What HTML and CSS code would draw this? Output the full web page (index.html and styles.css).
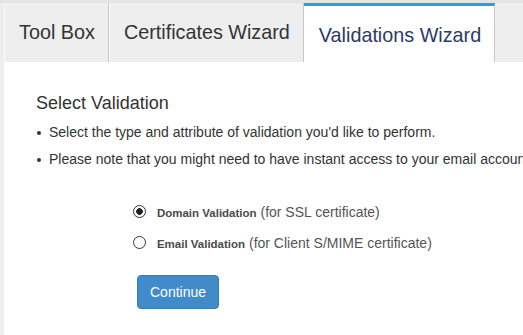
FILE: index.html
```html
<!DOCTYPE html>
<html lang="en">
<head>
  <meta charset="UTF-8" />
  <title>Validations Wizard</title>
  <link rel="stylesheet" href="styles.css">
</head>
<body>

  <div class="tabs">
    <div class="tab">Tool Box</div>
    <div class="tab">Certificates Wizard</div>
    <div class="tab active">Validations Wizard</div>
  </div>

  <div class="panel">
    <h2>Select Validation</h2>
    <ul class="notes">
      <li>Select the type and attribute of validation you'd like to perform.</li>
      <li>Please note that you might need to have instant access to your email account to complete the validation.</li>
    </ul>

    <form class="choices">
      <label class="choice">
        <input type="radio" name="vtype" value="domain" checked />
        <b>Domain Validation</b> (for SSL certificate)
      </label>
      <label class="choice">
        <input type="radio" name="vtype" value="email" />
        <b>Email Validation</b> (for Client S/MIME certificate)
      </label>
      <button type="button" class="btn">Continue</button>
    </form>
  </div>

</body>
</html>
```

FILE: styles.css
```css
html, body {
  margin: 0;
  padding: 0;
  height: 100%;
}

body {
  font-family: "Liberation Sans", Arial, sans-serif;
  background: #eeeeee;
  color: #333;
  overflow: hidden;
}

.tabs {
  display: flex;
  border-top: 3px solid #e4e4e4;
  padding-left: 4px;
  height: 59px;
}

.tab {
  font-size: 19.8px;
  line-height: 59px;
  padding: 0 13px 0 14px;
  color: #333;
  border-left: 1px solid #fafafa;
  border-right: 1px solid #c8c8c8;
  white-space: nowrap;
}

.tab.active {
  background: #fff;
  color: #2b3a67;
  border-top: 3px solid #2a9fd6;
  border-left: none;
  padding: 3px 13px 0 15px;
  line-height: 53px;
}

.panel {
  background: #fff;
  margin-left: 4px;
  height: 273px;
  padding: 31px 0 0 32px;
  box-sizing: border-box;
}

h2 {
  font-size: 18px;
  font-weight: normal;
  line-height: 20px;
  margin: 0 0 10px;
  color: #333;
}

.notes {
  list-style: none;
  margin: 0;
  padding: 0;
  font-size: 14px;
  line-height: 19px;
  white-space: nowrap;
}

.notes li {
  display: flex;
  align-items: center;
  margin-bottom: 8px;
}

.notes li::before {
  content: "";
  width: 4px;
  height: 4px;
  border-radius: 50%;
  background: #333;
  margin: 1px 8px 0 1px;
  flex-shrink: 0;
}

.choices {
  margin: 33px 0 0 97px;
}

.choice {
  display: block;
  height: 20px;
  line-height: 20px;
  margin-bottom: 11px;
  font-size: 14px;
  color: #555;
  white-space: nowrap;
}

.choice b {
  font-size: 11.5px;
  color: #4a4a4a;
}

.choice input {
  appearance: none;
  -webkit-appearance: none;
  vertical-align: -1px;
  width: 13px;
  height: 13px;
  margin: 0 7px 0 0;
  border: 1px solid #333;
  border-radius: 50%;
  background: #fff;
  box-sizing: border-box;
}

.choice input:checked {
  background: radial-gradient(circle, #222 0, #222 3px, #fff 3.6px);
}

.btn {
  margin: 11px 0 0 4px;
  font-family: "Liberation Sans", Arial, sans-serif;
  font-size: 14px;
  line-height: 20px;
  padding: 6px 12px;
  color: #fff;
  background-color: #428bca;
  border: 1px solid #357ebd;
  border-radius: 4px;
  cursor: pointer;
}
```
